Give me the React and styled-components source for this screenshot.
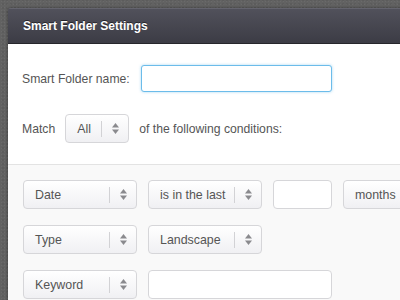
import styled, { createGlobalStyle } from "styled-components";

const GlobalStyle = createGlobalStyle`
  html, body {
    margin: 0;
    padding: 0;
    height: 100%;
    overflow: hidden;
  }

  body {
    background-color: #626262;
    background-image: radial-gradient(rgba(255,255,255,0.05) 1px, transparent 1px),
      radial-gradient(rgba(0,0,0,0.06) 1px, transparent 1px);
    background-size: 3px 3px, 4px 4px;
    background-position: 0 0, 1px 2px;
    font-family: "Liberation Sans", Arial, sans-serif;
  }
`

const Page = styled.div`
  padding: 8px 0 0 8px;
`

const Dialog = styled.div`
  width: 520px;
  border-radius: 3px 3px 0 0;
  overflow: hidden;
  box-shadow: 0 0 3px rgba(0, 0, 0, 0.45);
`

const TitleBar = styled.div`
  height: 34px;
  display: flex;
  align-items: center;
  padding: 0 15px;
  background: linear-gradient(#51515b, #3c3c45);
  border-top: 1px solid #64646e;
  border-bottom: 1px solid #26262b;
  color: #fff;
  font-size: 12px;
  font-weight: bold;
  text-shadow: 0 -1px 0 rgba(0, 0, 0, 0.5);
`

const Upper = styled.div`
  background: #ffffff;
  padding: 21px 14px 21px;
  display: flex;
  flex-direction: column;
  gap: 22px;
  border-bottom: 1px solid #e3e3e3;
`

const Lower = styled.div`
  background: #f9f9f9;
  padding: 15px 15px 20px;
  display: flex;
  flex-direction: column;
  gap: 16px;
`

const Row = styled.div`
  display: flex;
  align-items: center;
  gap: ${(p) => p.$gap || 11}px;
`

const Label = styled.span`
  font-size: 12.2px;
  color: #555;
  white-space: nowrap;
`

const NameInput = styled.input`
  width: 191px;
  height: 27px;
  box-sizing: border-box;
  border: 1px solid #6cbcea;
  border-radius: 3px;
  box-shadow: 0 0 3px rgba(108, 188, 234, 0.6);
  outline: none;
  background: #fff;
`

const TextBox = styled.div`
  width: ${(p) => p.$w}px;
  height: 29px;
  box-sizing: border-box;
  border: 1px solid #d6d6d9;
  border-radius: 4px;
  background: #fff;
`

const Select = styled.div`
  width: ${(p) => p.$w}px;
  height: 29px;
  box-sizing: border-box;
  display: flex;
  align-items: center;
  border: 1px solid #d6d6d9;
  border-radius: 4px;
  background: linear-gradient(#ffffff, #f0f0f3);
  color: #555;
  font-size: 12.4px;
  padding-left: 11px;
`

const SelectText = styled.span`
  flex: 1;
  white-space: nowrap;
`

const Divider = styled.span`
  width: 1px;
  height: 16px;
  background: #d2d2d5;
`

const Arrows = styled.span`
  width: 26px;
  display: flex;
  justify-content: center;
`

const Caret = () => (
  <svg width="7" height="11" viewBox="0 0 7 11">
    <path d="M3.5 0 L7 4.5 L0 4.5 Z" fill="#8a8a8e" />
    <path d="M0 6.5 L7 6.5 L3.5 11 Z" fill="#8a8a8e" />
  </svg>
)

const Dropdown = ({ w, children }) => (
  <Select $w={w}>
    <SelectText>{children}</SelectText>
    <Divider />
    <Arrows>
      <Caret />
    </Arrows>
  </Select>
)

const App = () => {
  return (
    <Page>
      <GlobalStyle />
      <Dialog>
        <TitleBar>Smart Folder Settings</TitleBar>
        <Upper>
          <Row $gap={11}>
            <Label>Smart Folder name:</Label>
            <NameInput />
          </Row>
          <Row $gap={10}>
            <Label>Match</Label>
            <Dropdown w={64}>All</Dropdown>
            <Label>of the following conditions:</Label>
          </Row>
        </Upper>
        <Lower>
          <Row>
            <Dropdown w={114}>Date</Dropdown>
            <Dropdown w={114}>is in the last</Dropdown>
            <TextBox $w={59} />
            <Dropdown w={114}>months</Dropdown>
          </Row>
          <Row>
            <Dropdown w={114}>Type</Dropdown>
            <Dropdown w={114}>Landscape</Dropdown>
          </Row>
          <Row>
            <Dropdown w={114}>Keyword</Dropdown>
            <TextBox $w={184} />
          </Row>
        </Lower>
      </Dialog>
    </Page>
  );
};

export default App;
